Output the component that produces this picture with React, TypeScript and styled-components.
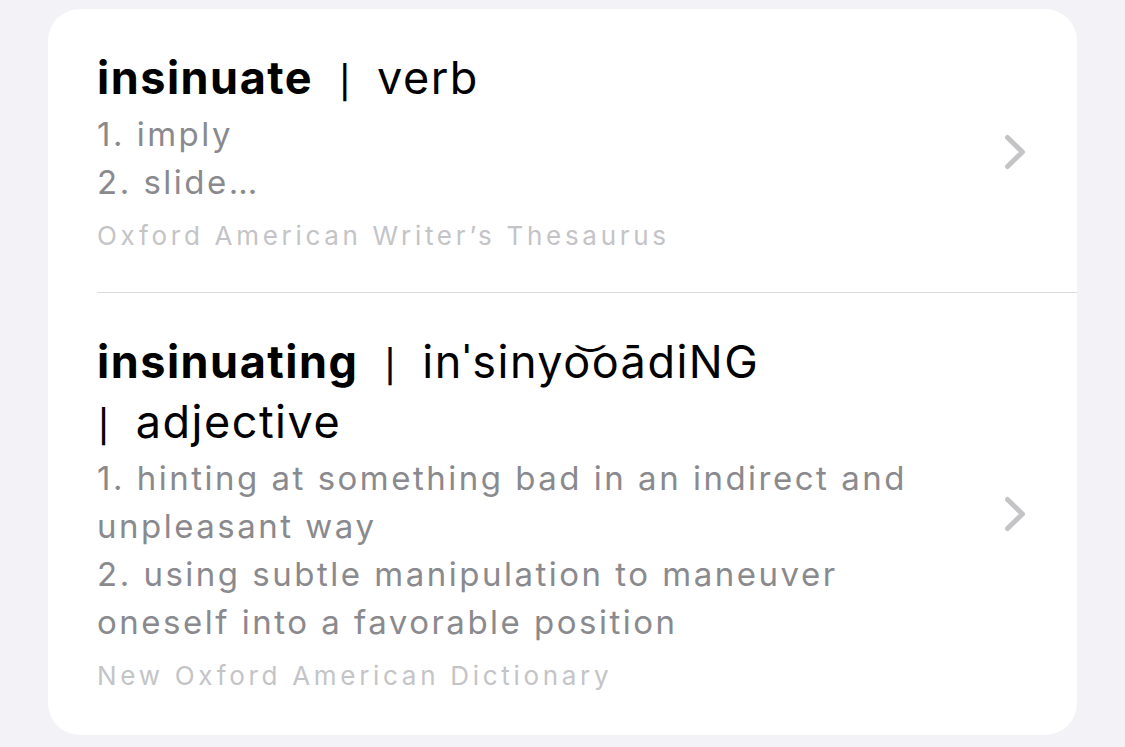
import React from "react";
import styled, { createGlobalStyle } from "styled-components";

const Global = createGlobalStyle`
  html, body { margin: 0; padding: 0; background: #f2f2f7; }
  body { font-family: Inter, "Noto Sans", "Liberation Sans", sans-serif; -webkit-font-smoothing: antialiased; }
`;

const Page = styled.div`
  padding: 9px 48px 13px;
  background: #f2f2f7;
  min-height: 747px;
  box-sizing: border-box;
`;

const Card = styled.div`
  background: #ffffff;
  border-radius: 32px;
  padding: 0 0 3px 49px;
`;

const Row = styled.div<{ $divider?: boolean }>`
  display: flex;
  align-items: center;
  padding: 39px 51px 36px 0;
  border-bottom: ${(p) => (p.$divider ? "1px solid #dcdcdf" : "none")};
`;

const TextCol = styled.div`
  flex: 1;
  min-width: 0;
  margin-right: 54px;
`;

const Title = styled.div`
  font-size: 45px;
  line-height: 60px;
  color: #000;
  font-weight: 400;
  word-spacing: 11px;
  letter-spacing: 1.5px;
`;

const Head = styled.span`
  font-weight: 700;
`;

const Part = styled.span`
  white-space: nowrap;
`;

const Bar = styled.span`
  font-size: 32px;
  line-height: 1;
  font-weight: 500;
  margin-left: 1px;
`;

const Defs = styled.div`
  margin-top: 2px;
  font-size: 33px;
  line-height: 48px;
  color: #8a8a8e;
  letter-spacing: 2.5px;
`;

const Source = styled.div`
  margin-top: 10px;
  font-size: 26px;
  line-height: 40px;
  color: #c4c4c7;
  letter-spacing: 3.7px;
`;

const Chevron = styled.svg`
  flex: none;
  width: 22px;
  height: 36px;
`;

const ChevronIcon = () => (
  <Chevron viewBox="0 0 22 36" fill="none">
    <path
      d="M3.5 3.5 L18.5 18 L3.5 32.5"
      stroke="#c4c4c7"
      strokeWidth="5"
      strokeLinecap="round"
      strokeLinejoin="round"
    />
  </Chevron>
);

export default function App() {
  return (
    <>
      <Global />
      <Page>
        <Card>
          <Row $divider>
            <TextCol>
              <Title>
                <Head>insinuate</Head>{" "}
                <Part>
                  <Bar>|</Bar> verb
                </Part>
              </Title>
              <Defs>
                <div>1. imply</div>
                <div>2. slide…</div>
              </Defs>
              <Source>Oxford American Writer’s Thesaurus</Source>
            </TextCol>
            <ChevronIcon />
          </Row>
          <Row>
            <TextCol>
              <Title>
                <Head>insinuating</Head>{" "}
                <Part>
                  <Bar>|</Bar> inˈsinyo͝oādiNG
                </Part>{" "}
                <Part>
                  <Bar>|</Bar> adjective
                </Part>
              </Title>
              <Defs>
                <div>1. hinting at something bad in an indirect and unpleasant way</div>
                <div>2. using subtle manipulation to maneuver oneself into a favorable position</div>
              </Defs>
              <Source>New Oxford American Dictionary</Source>
            </TextCol>
            <ChevronIcon />
          </Row>
        </Card>
      </Page>
    </>
  );
}
